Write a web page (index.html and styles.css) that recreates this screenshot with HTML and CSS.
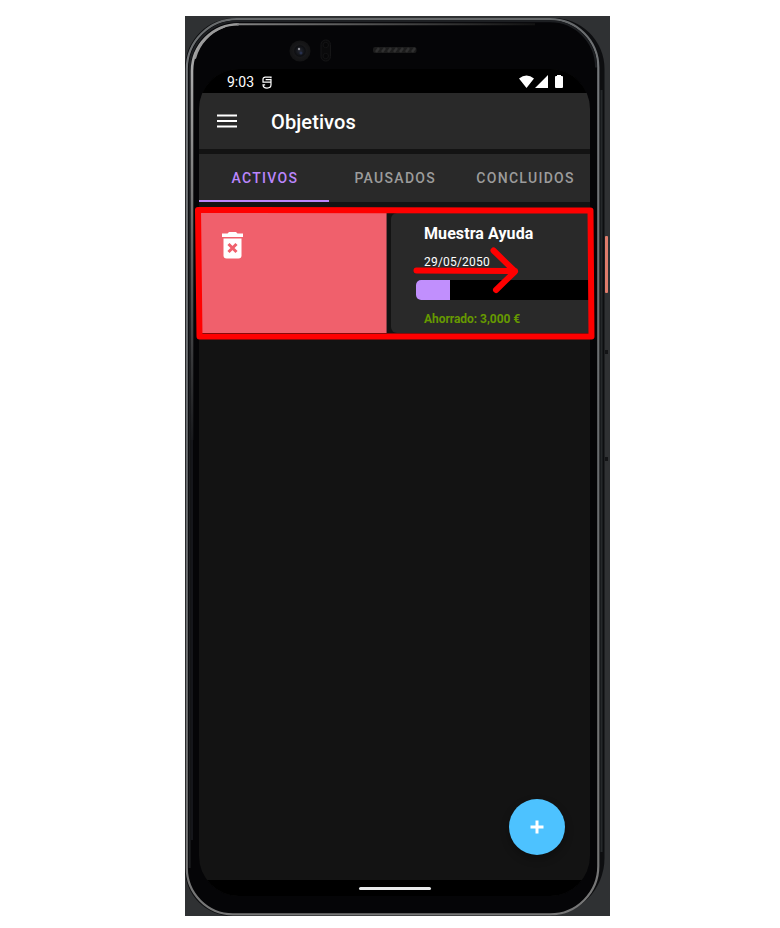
FILE: index.html
```html
<!DOCTYPE html>
<html lang="es">
<head>
<meta charset="utf-8">
<title>Objetivos</title>
<link rel="stylesheet" href="styles.css">
</head>
<body>
<main class="device">
  <svg class="frame" viewBox="185 16 425 900" aria-hidden="true">
    <defs>
      <linearGradient id="edge" x1="0" y1="0" x2="0" y2="1">
        <stop offset="0" stop-color="#66696b"/><stop offset=".06" stop-color="#75787b"/><stop offset=".5" stop-color="#686b6e"/><stop offset="1" stop-color="#777"/>
      </linearGradient>
      <linearGradient id="shine" gradientUnits="userSpaceOnUse" x1="192" y1="30" x2="192" y2="440">
        <stop offset="0" stop-color="#999"/><stop offset=".1" stop-color="#aaa"/><stop offset=".4" stop-color="#777"/><stop offset="1" stop-color="#18191c"/>
      </linearGradient>
      <linearGradient id="topshine" gradientUnits="userSpaceOnUse" x1="195" y1="0" x2="540" y2="0">
        <stop offset="0" stop-color="#999"/><stop offset=".2" stop-color="#777"/><stop offset="1" stop-color="#111"/>
      </linearGradient>
      <radialGradient id="lens"><stop offset="0" stop-color="#252833"/><stop offset=".5" stop-color="#0e0f12"/><stop offset=".6" stop-color="#18181a"/><stop offset="1" stop-color="#131314"/></radialGradient>
    </defs>
    <rect x="185" y="16" width="425" height="900" fill="#2f3133"/>
    <path d="M185 68A50 50 0 0 1 235 18H553A51 51 0 0 1 604.500 69V858A58 58 0 0 1 546.500 916H232A47 47 0 0 1 185 869Z" fill="#0d0e10"/>
    <path d="M186.800 868V69A50 50 0 0 1 236.800 19.200H550A48.300 48.300 0 0 1 598.300 67.500V866A48.300 48.300 0 0 1 550 914.300H233A46.200 46.200 0 0 1 186.800 868Z" fill="#050507" stroke="url(#edge)" stroke-width="2.200"/>
    <path d="M189.600 868V69A48 48 0 0 1 237.600 21.300H550A46 46 0 0 1 596 67.500" fill="none" stroke="#1d1f22" stroke-width="2"/>
    <path d="M192 440V71A46.700 46.700 0 0 1 238.700 24.300" fill="none" stroke="url(#shine)" stroke-width="2.600"/>
    <path d="M195.300 58A46 46 0 0 1 224 27" fill="none" stroke="#9a9a9a" stroke-width="1.800" stroke-linecap="round"/>
    <path d="M237 24.300H535" fill="none" stroke="url(#topshine)" stroke-width="2"/>
    <path d="M192 440V840" stroke="#15161a" stroke-width="2"/>
    <path d="M601.500 90V852" stroke="#25282a" stroke-width="2"/>
    <circle cx="300" cy="51" r="10.500" fill="url(#lens)"/>
    <circle cx="299" cy="49" r="1.200" fill="#909096"/><circle cx="301" cy="53" r="1.500" fill="#27304d"/>
    <rect x="321" y="40" width="9.500" height="21" rx="4.500" fill="#0a0a0b" stroke="#151516"/>
    <circle cx="325.800" cy="45" r="2.700" fill="#070708" stroke="#131314"/><circle cx="325.800" cy="56" r="2.700" fill="#070708" stroke="#131314"/>
    <rect x="373" y="47" width="43.500" height="6" rx="2" fill="#1c1c1c"/>
    <path d="M376 52L379 48M382 52L385 48M388 52L391 48M394 52L397 48M400 52L403 48M406 52L409 48M412 52L415 48" stroke="#303030" stroke-width="2.500"/>
    <rect x="605" y="236" width="3" height="57" rx="1" fill="#e07c6b"/>
    <rect x="605" y="350" width="3" height="4" fill="#131416"/><rect x="605" y="457" width="3" height="4" fill="#131416"/>
  </svg>

  <section class="screen">
    <div class="status">
      <span class="clock">9:03</span>
      <svg class="debug" viewBox="0 0 10 14"><path d="M9.300 2.500V1.300H3.200Q.7 1.300 .7 3.500V6.500H9.300V9.500Q9.300 13 5 13Q.7 13 .7 9.500H3M3.500 3.800H9.300V6.500" fill="none" stroke="#fff" stroke-width="1.300"/></svg>
      <svg class="signals" viewBox="0 0 46 14"><path d="M0 3.500Q7.500-2.500 15 3.500L7.500 13ZM16 13L29 0V13ZM36 2Q36 1 37 1H38V0H42V1H43Q44 1 44 2V12Q44 13 43 13H37Q36 13 36 12Z" fill="#fff"/></svg>
    </div>
    <header class="appbar">
      <svg class="menu" viewBox="0 0 20 14"><path d="M0 1.500H20M0 7H20M0 12.500H20" stroke="#fff" stroke-width="2"/></svg>
      <h1>Objetivos</h1>
    </header>
    <nav class="tabs">
      <span class="tab active">ACTIVOS</span>
      <span class="tab">PAUSADOS</span>
      <span class="tab">CONCLUIDOS</span>
    </nav>
    <div class="content">
      <div class="swipe">
        <svg class="trash" viewBox="0 0 21 27"><path d="M0 1.500H5.500L7 0H14L15.500 1.500H21V5H0Z" fill="#fff"/><path d="M1.500 6.500H19.500V23.500Q19.500 26.500 16.500 26.500H4.500Q1.500 26.500 1.500 23.500Z" fill="#fff"/><path d="M6.500 12L14.500 20M14.500 12L6.500 20" stroke="#f0606c" stroke-width="3"/></svg>
      </div>
      <article class="goal">
        <h2>Muestra Ayuda</h2>
        <p class="date">29/05/2050</p>
        <div class="progress"><div class="filled"></div></div>
        <p class="saved">Ahorrado: 3,000 €</p>
      </article>
    </div>
    <div class="home"><div class="pill"></div></div>
    <div class="fab"><svg viewBox="0 0 14 14"><path d="M7 .5V13.500M.5 7H13.500" stroke="#fff" stroke-width="3"/></svg></div>
  </section>

  <svg class="marks" viewBox="185 16 425 900" aria-hidden="true">
    <g fill="none" stroke="#f00" stroke-width="6" stroke-linecap="round" stroke-linejoin="round">
      <path d="M198 210L590.500 210.500L591.500 336.500L199.500 336.500Z"/>
      <path d="M416.500 270.500L515 271M493.500 250.500L515 271.500L496 290"/>
    </g>
  </svg>
</main>
</body>
</html>
```
FILE: styles.css
```css
* { box-sizing: border-box; }
body { margin: 0; background: #fff; font-family: Roboto, sans-serif; color: #fff; }
h1, h2, p { margin: 0; }
svg { display: block; }
.device { position: relative; width: 425px; height: 900px; margin: 16px 0 0 185px; padding: 53px 20px 20px 14px; }
.frame, .marks { position: absolute; inset: 0; width: 425px; height: 900px; }
.screen { position: relative; display: flex; flex-direction: column; width: 391px; height: 827px; background: #131313; border-radius: 40px; overflow: hidden; }
.status { display: flex; align-items: center; height: 24px; padding: 2px 25px 0 28px; background: #000; }
.clock { font-size: 14px; line-height: 20px; width: 35px; }
.debug { width: 10px; height: 13px; }
.signals { width: 46px; height: 14px; margin-left: auto; }
.appbar { display: flex; align-items: center; height: 56px; padding-left: 18px; background: #292929; }
.menu { width: 20px; height: 14px; margin-top: -1px; }
h1 { margin-left: 34px; font-size: 20px; line-height: 28px; font-weight: 500; letter-spacing: .1px; padding-top: 1px; }
.tabs { display: grid; grid-template-columns: repeat(3, 1fr); height: 48px; margin-top: 5px; background: #292929; }
.tab { display: flex; align-items: center; justify-content: center; border-bottom: 2px solid transparent; padding: 2px 0 0 1.5px; font-size: 14px; font-weight: 500; letter-spacing: 1.3px; color: #9c9c9c; }
.active { color: #bb86fc; border-bottom-color: #bb86fc; }
.content { display: flex; flex: 1; padding-top: 11px; }
.swipe { flex: none; width: 188px; height: 120px; padding: 19px 0 0 23px; background: #f0606c; border-right: 1px solid #8d4047; }
.trash { width: 21px; height: 27px; }
.goal { flex: none; width: 220px; height: 120px; margin-left: 4px; padding: 11px 0 0 25px; background: #292929; border-radius: 6px; }
h2 { padding-left: 8px; font-size: 16px; line-height: 20px; font-weight: 700; letter-spacing: .08px; }
.date { padding-left: 8px; margin-top: 10px; font-size: 12px; line-height: 16px; letter-spacing: .2px; }
.progress { height: 20px; margin-top: 10px; background: #000; border-radius: 5px 0 0 5px; overflow: hidden; }
.filled { width: 34px; height: 100%; background: #c18ffd; }
.saved { padding-left: 8px; margin-top: 11px; font-size: 12px; line-height: 16px; font-weight: 700; letter-spacing: -.04px; color: #669900; }
.home { display: flex; justify-content: center; align-items: center; height: 16px; background: #000; }
.pill { width: 72px; height: 3px; border-radius: 2px; background: #e8eaeb; }
.fab { position: absolute; right: 25px; bottom: 41px; display: grid; place-items: center; width: 56px; height: 56px; border-radius: 50%; background: #4dc2ff; box-shadow: 0 4px 8px rgba(0,0,0,.3); }
.fab svg { width: 14px; height: 14px; }
```
